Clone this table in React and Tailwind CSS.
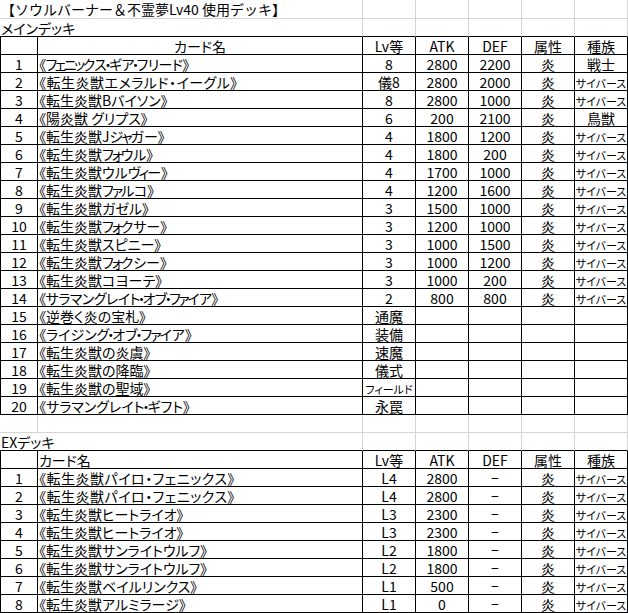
import React from "react";

const FONT = "font-['Noto_Sans_CJK_JP','Noto_Sans',sans-serif]";
const PALT = "[font-feature-settings:'palt']";
const CELL = "h-[18px] border-r border-b whitespace-nowrap overflow-hidden";
const TXT = "pt-[2px] leading-[15px] text-[14px]";
const SMALL = "pt-[3px] leading-[15px] text-[11px]";
const BK = "border-black";
const GR = "border-[#d4d4d4]";

// mode: "n" default, "d" dotted + tight, "m" medium dots, "w" wide (no compression)
const main = [
  ["1", "《フェニックス・ギア・フリード》", "8", "2800", "2200", "炎", "戦士", "d"],
  ["2", "《転生炎獣エメラルド・イーグル》", "儀8", "2800", "2000", "炎", "サイバース", "w"],
  ["3", "《転生炎獣Bバイソン》", "8", "2800", "1000", "炎", "サイバース", "n"],
  ["4", "《陽炎獣 グリプス》", "6", "200", "2100", "炎", "鳥獣", "n"],
  ["5", "《転生炎獣Jジャガー》", "4", "1800", "1200", "炎", "サイバース", "n"],
  ["6", "《転生炎獣フォウル》", "4", "1800", "200", "炎", "サイバース", "n"],
  ["7", "《転生炎獣ウルヴィー》", "4", "1700", "1000", "炎", "サイバース", "n"],
  ["8", "《転生炎獣ファルコ》", "4", "1200", "1600", "炎", "サイバース", "n"],
  ["9", "《転生炎獣ガゼル》", "3", "1500", "1000", "炎", "サイバース", "n"],
  ["10", "《転生炎獣フォクサー》", "3", "1200", "1000", "炎", "サイバース", "n"],
  ["11", "《転生炎獣スピニー》", "3", "1000", "1500", "炎", "サイバース", "n"],
  ["12", "《転生炎獣フォクシー》", "3", "1000", "1200", "炎", "サイバース", "n"],
  ["13", "《転生炎獣コヨーテ》", "3", "1000", "200", "炎", "サイバース", "n"],
  ["14", "《サラマングレイト・オブ・ファイア》", "2", "800", "800", "炎", "サイバース", "d"],
  ["15", "《逆巻く炎の宝札》", "通魔", "", "", "", "", "n"],
  ["16", "《ライジング・オブ・ファイア》", "装備", "", "", "", "", "m"],
  ["17", "《転生炎獣の炎虞》", "速魔", "", "", "", "", "n"],
  ["18", "《転生炎獣の降臨》", "儀式", "", "", "", "", "n"],
  ["19", "《転生炎獣の聖域》", "フィールド", "", "", "", "", "n"],
  ["20", "《サラマングレイト・ギフト》", "永罠", "", "", "", "", "m"],
];

const ex = [
  ["1", "《転生炎獣パイロ・フェニックス》", "L4", "2800", "−", "炎", "サイバース", "w"],
  ["2", "《転生炎獣パイロ・フェニックス》", "L4", "2800", "−", "炎", "サイバース", "w"],
  ["3", "《転生炎獣ヒートライオ》", "L3", "2300", "−", "炎", "サイバース", "n"],
  ["4", "《転生炎獣ヒートライオ》", "L3", "2300", "−", "炎", "サイバース", "n"],
  ["5", "《転生炎獣サンライトウルフ》", "L2", "1800", "−", "炎", "サイバース", "n"],
  ["6", "《転生炎獣サンライトウルフ》", "L2", "1800", "−", "炎", "サイバース", "n"],
  ["7", "《転生炎獣ベイルリンクス》", "L1", "500", "−", "炎", "サイバース", "n"],
  ["8", "《転生炎獣アルミラージ》", "L1", "0", "−", "炎", "サイバース", "n"],
];

const SMALL_KANA = "ァィゥェォッャュョ";

function Name({ text, mode }) {
  if (mode === "w") return <span className="tracking-[0.5px]">{text}</span>;
  const wrap = mode === "d" ? "tracking-[-0.5px]" : "";
  return (
    <span className={wrap}>
      {Array.from(text).map((ch, i) => {
        if (ch === "・") return <span key={i} className="mx-[-2px]">{ch}</span>;
        if (SMALL_KANA.includes(ch)) return <span key={i} className="mx-[-2px]">{ch}</span>;
        return <React.Fragment key={i}>{ch}</React.Fragment>;
      })}
    </span>
  );
}

function small(v) {
  return v === "サイバース" || v === "フィールド";
}

function DataRow({ row }) {
  const mode = row[7];
  return (
    <>
      {row.slice(0, 7).map((v, i) => {
        const base = `${CELL} ${BK} ${PALT} ${small(v) ? SMALL : TXT}`;
        if (i === 0) return <div key={i} className={`${base} border-l text-center`}>{v}</div>;
        if (i === 1)
          return (
            <div key={i} className={`${base} pl-[1px] text-left`}>
              <Name text={v} mode={mode} />
            </div>
          );
        return <div key={i} className={`${base} text-center`}>{v}</div>;
      })}
    </>
  );
}

function HeaderRow({ center }) {
  return (
    <>
      <div className={`${CELL} ${BK} ${TXT} border-l`}></div>
      <div className={`${CELL} ${BK} ${TXT} ${PALT} ${center ? "text-center" : "text-left pl-[1px]"}`}>カード名</div>
      {["Lv等", "ATK", "DEF", "属性", "種族"].map((h) => (
        <div key={h} className={`${CELL} ${BK} ${TXT} text-center`}>{h}</div>
      ))}
    </>
  );
}

function LabelRow({ text, bottom, h = "h-[18px]", palt = true }) {
  return (
    <>
      <div className={`${h} col-span-2 border-r border-b ${GR} ${bottom} ${TXT} ${palt ? PALT : ""} pl-[1px] whitespace-nowrap`}>{text}</div>
      {[0, 1, 2, 3, 4].map((k) => (
        <div key={k} className={`${h} border-r border-b ${GR} ${bottom}`}></div>
      ))}
    </>
  );
}

function EmptyRow() {
  return (
    <>
      {[0, 1, 2, 3, 4, 5, 6].map((k) => (
        <div key={k} className={`h-[18px] border-r border-b ${GR}`}></div>
      ))}
    </>
  );
}

export default function App() {
  return (
    <div className={`w-[628px] h-[613px] bg-white text-black overflow-hidden ${FONT}`}>
      <div className="grid grid-cols-[38px_325px_53px_53px_53px_53px_53px]">
        <LabelRow text="【ソウルバーナー＆不霊夢Lv40 使用デッキ】" bottom="" h="h-[19px]" palt={false} />
        <LabelRow text="メインデッキ" bottom="border-b-black" />
        <HeaderRow center />
        {main.map((r) => (
          <DataRow key={"m" + r[0]} row={r} />
        ))}
        <EmptyRow />
        <LabelRow text="EXデッキ" bottom="border-b-black" />
        <HeaderRow center={false} />
        {ex.map((r) => (
          <DataRow key={"e" + r[0]} row={r} />
        ))}
      </div>
    </div>
  );
}
